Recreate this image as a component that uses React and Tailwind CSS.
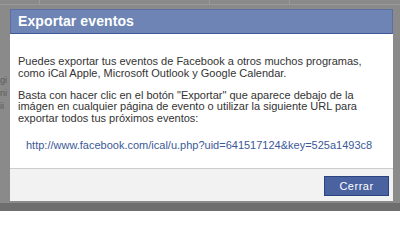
import React from 'react';

const font = { fontFamily: '"Liberation Sans", Arial, sans-serif' };

export default function App() {
  return (
    <div className="w-[400px] h-[211px] overflow-hidden bg-[#8a8a8a] flex flex-col" style={font}>
      {/* page behind the overlay */}
      <div className="h-[9px] flex items-start">
        <div className="w-full h-[5px] border-b border-[#9a9a9a] flex">
          <div className="w-[40px] border-r border-[#9a9a9a]" />
          <div className="w-[170px] border-r border-[#9a9a9a]" />
          <div className="w-[80px] border-r border-[#9a9a9a]" />
        </div>
      </div>
      <div className="flex">
        <div className="w-[10px] flex flex-col gap-[3px] pt-[66px] text-[9px] leading-[10px] text-[#5a5a5a] overflow-hidden">
          <span>gi</span>
          <span>ni</span>
          <span>ii</span>
        </div>

        {/* dialog */}
        <div className="w-[383px] flex flex-col">
          <div className="h-[25px] bg-[#6d84b4] border border-[#5b6fa0] border-b-[#3b5998] flex items-center pl-[7px]">
            <span className="text-white text-[14px] font-bold tracking-[0.1px]">Exportar eventos</span>
          </div>
          <div className="h-[134px] bg-white px-[8px] pt-[22px] text-[11px] leading-[11.5px] text-[#333]">
            <p>
              Puedes exportar tus eventos de Facebook a otros muchos programas,
              <br />
              como iCal Apple, Microsoft Outlook y Google Calendar.
            </p>
            <p className="mt-[10.5px]">
              Basta con hacer clic en el botón "Exportar" que aparece debajo de la
              <br />
              imágen en cualquier página de evento o utilizar la siguiente URL para
              <br />
              exportar todos tus próximos eventos:
            </p>
            <p className="mt-[15.5px] pl-[8px] text-[#3b5998] whitespace-nowrap">
              http://www.facebook.com/ical/u.php?uid=641517124&amp;key=525a1493c8
            </p>
          </div>
          <div className="h-[33px] bg-[#f2f2f2] border-t border-[#cccccc] flex items-start justify-end pt-[7px] pr-[4px]">
            <button className="w-[65px] h-[20px] bg-[#4a62a0] border border-[#29447e] text-white text-[11px] tracking-[0.5px]">
              Cerrar
            </button>
          </div>
        </div>
      </div>
      <div className="flex-1 mt-[2px] bg-[#6e6e6e]" />
    </div>
  );
}
